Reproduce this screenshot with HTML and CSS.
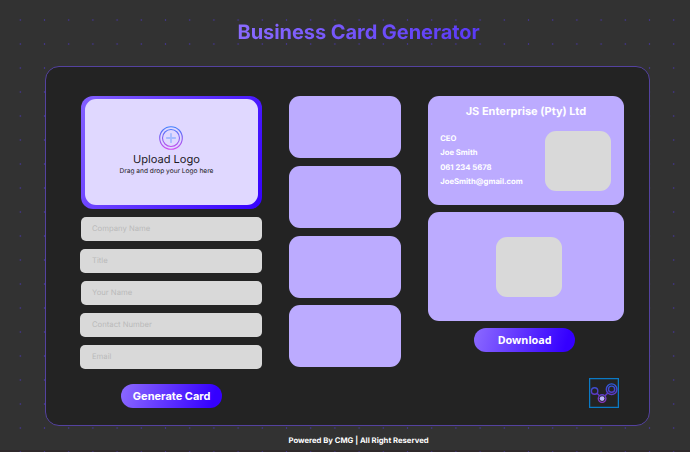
FILE: index.html
```html
<!DOCTYPE html>
<html lang="en">
<head>
<meta charset="utf-8">
<title>Business Card Generator</title>
<link rel="stylesheet" href="styles.css">
</head>
<body>
<svg class="dots" width="690" height="452" aria-hidden="true">
  <defs>
    <pattern id="dot" x="8.2" y="8" width="24.2" height="24" patternUnits="userSpaceOnUse">
      <circle cx="12.1" cy="12" r=".65" fill="#4936b4"/>
    </pattern>
  </defs>
  <rect y="10" width="690" height="442" fill="url(#dot)"/>
</svg>
<h1 class="title">Business Card Generator</h1>
<main class="panel">
  <section class="form">
    <div class="upload">
      <div class="dropzone">
        <svg class="plus" width="24" height="24" viewBox="0 0 24 24" fill="none">
          <defs>
            <linearGradient id="ring" x1="0" y1="0" x2="0" y2="24" gradientUnits="userSpaceOnUse">
              <stop stop-color="#3b82ff"/><stop offset=".55" stop-color="#8b5cf0"/><stop offset="1" stop-color="#d44df0"/>
            </linearGradient>
          </defs>
          <circle cx="12" cy="12" r="11.3" stroke="url(#ring)" stroke-width="1.1"/>
          <circle cx="12" cy="12" r="8.5" stroke="url(#ring)" stroke-width="1.1"/>
          <path d="M12 7.8v8.4M7.8 12h8.4" stroke="#a5bbff" stroke-width="1.8" stroke-linecap="round"/>
        </svg>
        <p class="upload-title">Upload Logo</p>
        <p class="upload-hint">Drag and drop your Logo here</p>
      </div>
    </div>
    <div class="fields">
      <div class="field">Company Name</div>
      <div class="field wide">Title</div>
      <div class="field">Your Name</div>
      <div class="field wide">Contact Number</div>
      <div class="field wide">Email</div>
    </div>
    <button class="button generate">Generate Card</button>
  </section>
  <section class="templates">
    <div class="template"></div>
    <div class="template"></div>
    <div class="template"></div>
    <div class="template"></div>
  </section>
  <section class="preview">
    <div class="card front">
      <h2 class="company">JS Enterprise (Pty) Ltd</h2>
      <div class="details">
        <div class="contact">
          <p>CEO</p>
          <p>Joe Smith</p>
          <p>061 234 5678</p>
          <p>JoeSmith@gmail.com</p>
        </div>
        <div class="logo-box"></div>
      </div>
    </div>
    <div class="card back"><div class="logo-box"></div></div>
    <button class="button download">Download</button>
    <svg class="brand" width="30" height="30" viewBox="0 0 30 30" fill="none">
      <defs>
        <linearGradient id="brand" x1="0" y1="5" x2="0" y2="25" gradientUnits="userSpaceOnUse">
          <stop stop-color="#2860e0"/><stop offset=".45" stop-color="#503cc8"/><stop offset="1" stop-color="#8b36c0"/>
        </linearGradient>
      </defs>
      <rect x=".6" y=".6" width="28.8" height="28.8" stroke="#0b7ac5" stroke-width="1.3"/>
      <g stroke="url(#brand)" stroke-width="1.4">
        <circle cx="5.6" cy="13" r="3.2"/>
        <circle cx="22.6" cy="11.2" r="5.3"/>
        <circle cx="22.6" cy="11.2" r="3.1"/>
        <circle cx="13.1" cy="20.6" r="3.8"/>
        <path d="M8 15.3l2.5 2.5M15.8 18l3-3"/>
      </g>
      <circle cx="13.1" cy="20.6" r="2.4" fill="#b9b5fa"/>
    </svg>
  </section>
</main>
<footer class="footer">Powered By CMG | All Right Reserved</footer>
</body>
</html>
```

FILE: styles.css
```css
* { box-sizing: border-box; }
body {
  margin: 0;
  width: 690px;
  height: 452px;
  overflow: hidden;
  background: linear-gradient(#323232 450.5px, #2f292b 450.5px);
  font-family: Inter, "Liberation Sans", sans-serif;
  text-rendering: geometricPrecision;
}
h1, h2, p { margin: 0; }
.dots { position: absolute; top: 0; left: 0; z-index: -1; }
.title {
  width: 244px;
  margin-left: 237.5px;
  padding-top: 20px;
  height: 66px;
  font-size: 20px;
  line-height: 24px;
  font-weight: 700;
  letter-spacing: -.06px;
  white-space: nowrap;
  color: transparent;
  background: linear-gradient(100deg, #8b6cff, #5838f5);
  -webkit-background-clip: text;
  background-clip: text;
}
.panel {
  display: flex;
  align-items: flex-start;
  width: 605px;
  height: 360px;
  margin-left: 45px;
  padding: 28.5px 25px 0 35px;
  border: 1px solid #54429f;
  border-radius: 14px;
  background: #232323;
}
.form { width: 181.4px; padding-top: .5px; }
.upload {
  height: 113px;
  padding: 3.3px 4px 4px 3.5px;
  border-radius: 12px;
  background: linear-gradient(120deg, #8360ff, #3500ff);
}
.dropzone {
  display: flex;
  flex-direction: column;
  align-items: center;
  height: 105.7px;
  padding: 26.5px 10px 0 0;
  border-radius: 11px;
  background: #e0d8ff;
  color: #1d1a26;
}
.upload-title { margin-top: 2px; font-size: 11.1px; line-height: 15px; }
.upload-hint { font-size: 6.6px; line-height: 9px; }
.plus { flex: none; margin-left: 10px; }
.fields { display: grid; gap: 7.9px; margin-top: 8.4px; }
.field {
  height: 24px;
  padding-left: 11px;
  border-radius: 5px;
  background: #d9d9d9;
  color: #bababa;
  font-size: 7.7px;
  line-height: 24px;
}
.wide { margin-left: -.7px; margin-right: .5px; padding-left: 11.7px; }
.button {
  display: block;
  width: 101px;
  height: 24.3px;
  padding: 0;
  border: 0;
  border-radius: 12px;
  background: linear-gradient(105deg, #8764ff 5%, #3500ff 90%);
  color: #fff;
  font: 700 11px/24px Inter, sans-serif;
}
.generate { margin: 14.8px 0 0 40.2px; }
.templates {
  display: grid;
  gap: 7.8px;
  width: 111.5px;
  margin-left: 26.9px;
  padding-top: .5px;
}
.template { height: 62px; border-radius: 11px; background: #bcabff; }
.preview { width: 195.5px; margin-left: 27.4px; }
.card { height: 109px; border-radius: 11px; background: #bcabff; color: #fff; }
.company {
  padding: 8.5px 0 0;
  font-size: 11px;
  line-height: 15px;
  font-weight: 700;
  text-align: center;
}
.details { display: flex; justify-content: space-between; padding: 12px 12.5px 0 12px; }
.contact { padding-top: 1px; font-size: 7.7px; line-height: 14.4px; font-weight: 700; }
.logo-box { width: 66px; height: 60px; border-radius: 11px; background: #d9d9d9; }
.back { display: flex; justify-content: center; margin-top: 7.3px; padding: 25.7px 0 0 5.4px; }
.download { margin: 7.4px 0 0 46px; font-family: "Noto Sans", sans-serif; font-size: 10.8px; }
.brand { display: block; margin: 25.5px 0 0 160.8px; }
.footer {
  padding-left: 288.5px;
  margin-top: 9px;
  color: #fff;
  font-size: 7.7px;
  line-height: 12px;
  font-weight: 700;
}
```
